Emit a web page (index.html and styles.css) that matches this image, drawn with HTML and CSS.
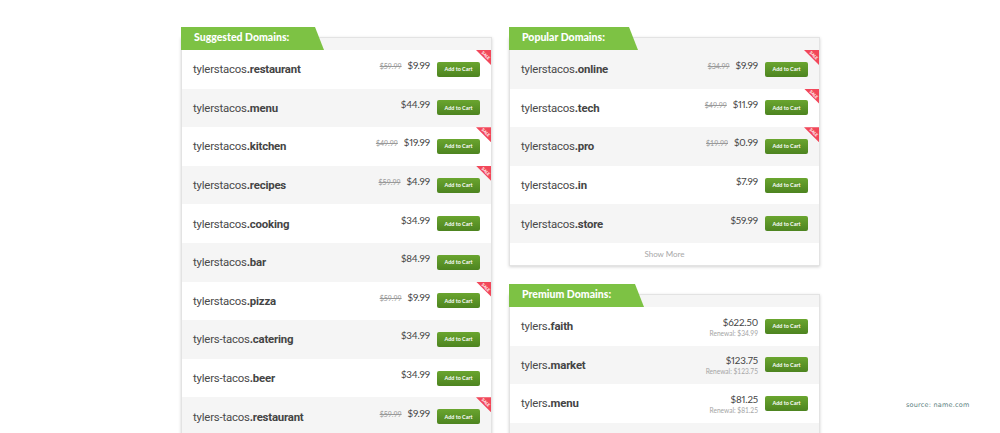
FILE: index.html
```html
<!DOCTYPE html>
<html lang="en">
<head>
<meta charset="utf-8">
<title>Domains</title>
<link rel="stylesheet" href="styles.css">
</head>
<body>
<main class="page">
  <section class="column">
    <div class="panel">
      <h2 class="tab">Suggested Domains:</h2>
      <div class="row"><span class="name">tylerstacos<b>.restaurant</b></span><div class="price"><s>$59.99</s><span class="now">$9.99</span></div><button class="cart">Add to Cart</button><i class="sale"><em>SALE</em></i></div>
      <div class="row"><span class="name">tylerstacos<b>.menu</b></span><div class="price"><span class="now">$44.99</span></div><button class="cart">Add to Cart</button></div>
      <div class="row"><span class="name">tylerstacos<b>.kitchen</b></span><div class="price"><s>$49.99</s><span class="now">$19.99</span></div><button class="cart">Add to Cart</button><i class="sale"><em>SALE</em></i></div>
      <div class="row"><span class="name">tylerstacos<b>.recipes</b></span><div class="price"><s>$59.99</s><span class="now">$4.99</span></div><button class="cart">Add to Cart</button><i class="sale"><em>SALE</em></i></div>
      <div class="row"><span class="name">tylerstacos<b>.cooking</b></span><div class="price"><span class="now">$34.99</span></div><button class="cart">Add to Cart</button></div>
      <div class="row"><span class="name">tylerstacos<b>.bar</b></span><div class="price"><span class="now">$84.99</span></div><button class="cart">Add to Cart</button></div>
      <div class="row"><span class="name">tylerstacos<b>.pizza</b></span><div class="price"><s>$59.99</s><span class="now">$9.99</span></div><button class="cart">Add to Cart</button><i class="sale"><em>SALE</em></i></div>
      <div class="row"><span class="name">tylers-tacos<b>.catering</b></span><div class="price"><span class="now">$34.99</span></div><button class="cart">Add to Cart</button></div>
      <div class="row"><span class="name">tylers-tacos<b>.beer</b></span><div class="price"><span class="now">$34.99</span></div><button class="cart">Add to Cart</button></div>
      <div class="row"><span class="name">tylers-tacos<b>.restaurant</b></span><div class="price"><s>$59.99</s><span class="now">$9.99</span></div><button class="cart">Add to Cart</button><i class="sale"><em>SALE</em></i></div>
    </div>
  </section>
  <section class="column">
    <div class="panel panel-alt">
      <h2 class="tab tab-popular">Popular Domains:</h2>
      <div class="row"><span class="name">tylerstacos<b>.online</b></span><div class="price"><s>$34.99</s><span class="now">$9.99</span></div><button class="cart">Add to Cart</button><i class="sale"><em>SALE</em></i></div>
      <div class="row"><span class="name">tylerstacos<b>.tech</b></span><div class="price"><s>$49.99</s><span class="now">$11.99</span></div><button class="cart">Add to Cart</button><i class="sale"><em>SALE</em></i></div>
      <div class="row"><span class="name">tylerstacos<b>.pro</b></span><div class="price"><s>$19.99</s><span class="now">$0.99</span></div><button class="cart">Add to Cart</button><i class="sale"><em>SALE</em></i></div>
      <div class="row"><span class="name">tylerstacos<b>.in</b></span><div class="price"><span class="now">$7.99</span></div><button class="cart">Add to Cart</button></div>
      <div class="row"><span class="name">tylerstacos<b>.store</b></span><div class="price"><span class="now">$59.99</span></div><button class="cart">Add to Cart</button></div>
      <div class="more">Show More</div>
    </div>
    <div class="panel">
      <h2 class="tab tab-premium">Premium Domains:</h2>
      <div class="row"><span class="name">tylers<b>.faith</b></span><div class="price stacked"><span class="now">$622.50</span><small>Renewal: $34.99</small></div><button class="cart">Add to Cart</button></div>
      <div class="row"><span class="name">tylers<b>.market</b></span><div class="price stacked"><span class="now">$123.75</span><small>Renewal: $123.75</small></div><button class="cart">Add to Cart</button></div>
      <div class="row"><span class="name">tylers<b>.menu</b></span><div class="price stacked"><span class="now">$81.25</span><small>Renewal: $81.25</small></div><button class="cart">Add to Cart</button></div>
      <div class="row"></div>
    </div>
  </section>
  <aside class="source">source: name.com</aside>
</main>
</body>
</html>
```
FILE: styles.css
```css
* { box-sizing: border-box; }
html, body { margin: 0; height: 100%; overflow: hidden; background: #fff; }
body { font-family: Lato, "Open Sans", sans-serif; color: #444; }
.page { display: flex; gap: 17px; padding: 27px 0 0 181px; height: 433px; overflow: hidden; position: relative; }
.column { width: 311px; display: flex; flex-direction: column; gap: 18px; }
.panel { position: relative; margin-top: 10px; padding-top: 12px; background: #f5f5f5; border: 1px solid #e3e3e3; box-shadow: 0 1px 3px rgba(0,0,0,.18); flex: none; }
.tab { position: absolute; left: -1px; top: -11px; width: 143px; height: 23px; margin: 0; padding-left: 13px; background: #7dc244; color: #fff; font-size: 10.5px; font-weight: 900; line-height: 21px; clip-path: polygon(0 0, 134px 0, 100% 100%, 0 100%); }
.tab-popular { width: 129px; clip-path: polygon(0 0, 120px 0, 100% 100%, 0 100%); }
.tab-premium { width: 135px; clip-path: polygon(0 0, 126px 0, 100% 100%, 0 100%); }
.row { position: relative; display: flex; align-items: center; height: 38.6px; padding: 0 11px; background: #fff; overflow: hidden; }
.row:nth-of-type(even) { background: #f5f5f5; }
.panel-alt .row:nth-of-type(odd) { background: #f5f5f5; }
.panel-alt .row:nth-of-type(even) { background: #fff; }
.name { flex: 1; font-family: Roboto, Lato, sans-serif; font-size: 11.4px; letter-spacing: -.2px; color: #4a4a4a; }
.name b { font-weight: 700; color: #444; }
.price { display: flex; align-items: baseline; gap: 6px; margin: 0 7px 8px 0; color: #444; }
.price s { font-size: 7px; color: #999; }
.now { font-size: 9.8px; letter-spacing: -.15px; font-variant-numeric: proportional-nums; }
.stacked { flex-direction: column; align-items: flex-end; gap: 1px; margin: 2px 7px 0 0; line-height: 11px; }
.stacked small { font-size: 6.6px; color: #a5a5a5; line-height: 9px; }
.cart { width: 43px; height: 15px; padding: 0; border: 0; border-radius: 2px; background: linear-gradient(#6aa52f, #4d8420); color: #fff; font: 700 5.4px Lato, sans-serif; }
.sale { position: absolute; top: 0; right: 0; width: 15px; height: 15px; background: #f2475a; clip-path: polygon(0 0, 100% 0, 100% 100%); }
.sale em { position: absolute; top: 3px; right: 0; font: 900 4.2px Lato, sans-serif; color: #fff; transform: rotate(45deg); }
.more { height: 22px; background: #fff; text-align: center; font-size: 8px; line-height: 22px; color: #a8a8a8; }
.source { position: absolute; left: 906px; top: 401px; font: 6.5px "DejaVu Sans", sans-serif; letter-spacing: .2px; color: #5a8080; }
```
